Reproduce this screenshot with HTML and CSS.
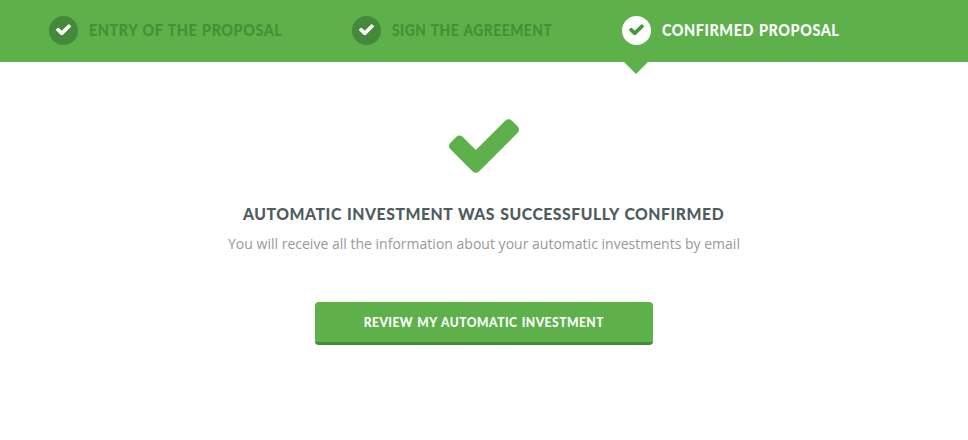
FILE: index.html
```html
<!DOCTYPE html>
<html lang="en">
<head>
<meta charset="utf-8">
<title>Automatic investment</title>
<link rel="stylesheet" href="styles.css">
</head>
<body>
<svg class="defs" width="0" height="0" aria-hidden="true">
  <symbol id="check" viewBox="121 334 1550 1188"><path d="M1671 566q0 40-28 68l-724 724-136 136q-28 28-68 28t-68-28l-136-136-362-362q-28-28-28-68t28-68l136-136q28-28 68-28t68 28l294 295 656-657q28-28 68-28t68 28l136 136q28 28 28 68z"/></symbol>
</svg>
<nav class="steps">
  <div class="step step-entry"><span class="dot"><svg class="tick"><use href="#check"/></svg></span><span class="label">ENTRY OF THE PROPOSAL</span></div>
  <div class="step step-sign"><span class="dot"><svg class="tick"><use href="#check"/></svg></span><span class="label">SIGN THE AGREEMENT</span></div>
  <div class="step step-confirmed active"><span class="dot"><svg class="tick"><use href="#check"/></svg></span><span class="label">CONFIRMED PROPOSAL</span></div>
</nav>
<main class="content">
  <svg class="big-check"><use href="#check"/></svg>
  <h1 class="title">AUTOMATIC INVESTMENT WAS SUCCESSFULLY CONFIRMED</h1>
  <p class="info">You will receive all the information about your automatic investments by email</p>
  <a class="button"><span class="button-label">REVIEW MY AUTOMATIC INVESTMENT</span></a>
</main>
</body>
</html>
```
FILE: styles.css
```css
* { box-sizing: border-box; }
body { margin: 0; background: #fff; font-family: Lato, "Liberation Sans", sans-serif; }
.defs { display: none; }
.steps { display: flex; height: 62px; padding: 0 0 1px 49px; background: #5db04a; }
.step { position: relative; display: flex; align-items: center; gap: 11px; }
.step-entry { width: 303px; }
.step-sign { width: 270px; }
.dot { display: flex; justify-content: center; width: 29px; height: 29px; padding-top: 7.5px; border-radius: 50%; background: #45893a; flex: none; }
.tick { width: 15px; height: 11.8px; fill: #fff; }
.label { margin-bottom: 2px; font-size: 16px; font-weight: 900; line-height: 20px; letter-spacing: 0.6px; word-spacing: 1px; white-space: nowrap; color: #459036; transform: scaleX(0.901); transform-origin: left; }
.step-sign .label { transform: scaleX(0.862); }
.step-confirmed .label { transform: scaleX(0.903); }
.active .dot { background: #fff; }
.active .tick { fill: #45983a; }
.active .label { color: #fff; }
.active::after { content: ""; position: absolute; left: 1.5px; top: 61.5px; border: solid transparent; border-width: 12px 12px 0; border-top-color: #5db04a; }
.content { display: flex; flex-direction: column; align-items: center; padding-top: 57px; }
.big-check { width: 70px; height: 54px; fill: #5db04a; }
.title { margin: 29px 0 0; font-size: 17.5px; font-weight: 900; line-height: 24px; letter-spacing: 0.6px; word-spacing: 1px; color: #4f5c5d; white-space: nowrap; transform: scaleX(0.899); }
.info { margin: 8px 0 0; font-family: "Open Sans", sans-serif; font-size: 14px; line-height: 20px; letter-spacing: 0.01px; color: #999; white-space: nowrap; }
.button { display: flex; align-items: center; justify-content: center; width: 338px; height: 43px; margin-top: 48px; padding-bottom: 1px; border-bottom: 3px solid #45893a; border-radius: 4px; background: #5db04a; color: #fff; font-size: 13.5px; font-weight: 900; }
.button-label { letter-spacing: 0.5px; word-spacing: 1px; white-space: nowrap; transform: scaleX(0.898); }
```
